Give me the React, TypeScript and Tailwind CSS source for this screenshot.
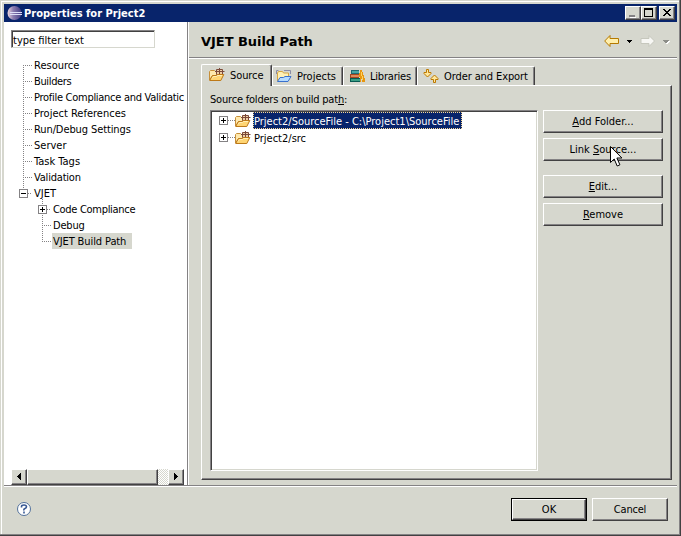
import React from "react";

type Kids = { children?: React.ReactNode };

const raised =
  "border border-t-white border-l-white border-r-[#424142] border-b-[#424142] shadow-[inset_-1px_-1px_0_#848284]";

function Toggle({ open }: { open?: boolean }) {
  return (
    <svg width="9" height="9" className="relative shrink-0" shapeRendering="crispEdges">
      <rect width="9" height="9" fill="#848284" />
      <rect x="1" y="1" width="7" height="7" fill="#fff" />
      <rect x="2" y="4" width="5" height="1" fill="#000" />
      {!open && <rect x="4" y="2" width="1" height="5" fill="#000" />}
    </svg>
  );
}

function Dots({ w }: { w: number }) {
  return (
    <svg width={w} height="1" className="shrink-0" shapeRendering="crispEdges">
      <line x1="0" y1="0.5" x2={w} y2="0.5" stroke="#848284" strokeDasharray="1 1" />
    </svg>
  );
}

function VDots({ h, className }: { h: number; className: string }) {
  return (
    <svg width="1" height={h} className={"absolute " + className} shapeRendering="crispEdges">
      <line x1="0.5" y1="0" x2="0.5" y2={h} stroke="#848284" strokeDasharray="1 1" />
    </svg>
  );
}

function PackageFolder() {
  return (
    <svg width="16" height="16" viewBox="0 0 16 16" className="shrink-0">
      <path d="M.5 13V4.500L1.500 3.500h4l1 1H12v4H3.500z" fill="#ffe9ad" stroke="#c68e39" />
      <path d="M7.500 2.500h6v5h-6z" fill="#efcfa5" stroke="#7b4939" />
      <path d="M6 4.500h9.500M10.500 1v7" stroke="#7b4939" />
      <path d="M.7 13.500 3.500 8.500h3.500l1.500-1h6.300l-3 6z" fill="#ffd573" stroke="#bd7918" />
      <path d="M3 11.500 4.500 9.500h3l1-1h4.500" fill="none" stroke="#fff0b8" />
    </svg>
  );
}

function ProjectFolder() {
  return (
    <svg width="16" height="16" viewBox="0 0 16 16" className="shrink-0">
      <path d="M1.500 13V5L2.500 3.500h4L7.500 5h5v4" fill="#fff0b5" stroke="#d6a642" />
      <path d="M.5 6V2.500h2M8 2.500h6.500V6" fill="none" stroke="#8c8ca5" />
      <path d="M1.500 13.500 4 9.500h3.500l1.500-1h6l-3 5z" fill="#b5dbff" stroke="#3971ce" />
    </svg>
  );
}

function Books() {
  return (
    <svg width="16" height="16" viewBox="0 0 16 16" className="shrink-0" shapeRendering="crispEdges">
      <path d="M2 2h8v4H2z" fill="#216973" />
      <path d="M3 3h7v2H3z" fill="#4aa6a5" />
      <path d="M1 6h9v4H1z" fill="#a54521" />
      <path d="M2 7h8v2H2z" fill="#de8a5a" />
      <path d="M1 10h10v4H1z" fill="#085952" />
      <path d="M2 11h9v2H2z" fill="#399e84" />
      <path d="M11 2h2v2h1v3h1v3h1v4h-3v-3h-1v3h-1V9h-1V5h1z" fill="#e79610" />
      <path d="M12 4h1v4h-1zM13 8h1v4h-1z" fill="#ffd35a" />
    </svg>
  );
}

function OrderArrows() {
  return (
    <svg width="16" height="16" viewBox="0 0 16 16" className="shrink-0">
      <path d="M3.500 1.500h2v3h2.500v1L4.500 9 1 5.500v-1h2.500z" fill="#ffe79c" stroke="#bd7900" />
      <path d="M10.500 14.500h2v-3H15v-1L11.500 7 8 10.500v1h2.500z" fill="#ffe79c" stroke="#bd7900" />
    </svg>
  );
}

function EclipseLogo() {
  return (
    <svg width="16" height="16" viewBox="0 0 16 16" className="shrink-0">
      <defs>
        <linearGradient id="orb" x1="0" y1="0" x2="1" y2="0">
          <stop offset="0" stopColor="#efd7de" />
          <stop offset=".4" stopColor="#8c7db0" />
          <stop offset="1" stopColor="#423c84" />
        </linearGradient>
      </defs>
      <circle cx="7.500" cy="8" r="7" fill="url(#orb)" />
      <path d="M3 7.500h12M3 9.500h12" stroke="#dedff7" />
    </svg>
  );
}

function CaptionButton({ children }: Kids) {
  return <div className={"h-[14px] w-4 shrink-0 bg-[#d6d7ce] " + raised}>{children}</div>;
}

function TreeRow({ label, tracking = "" }: { label: string; tracking?: string }) {
  return (
    <div className="flex h-4 items-center pl-[19px]">
      <Dots w={9} />
      <span className={"ml-[2px] whitespace-nowrap pt-0.5 " + tracking}>{label}</span>
    </div>
  );
}

function SourceRow({ label, selected }: { label: string; selected?: boolean }) {
  return (
    <div className="flex h-[17px] items-center pl-[7px]">
      <Toggle />
      <Dots w={7} />
      <PackageFolder />
      <span
        className={
          "ml-[2px] flex h-[17px] items-center whitespace-nowrap border pt-[3px] " +
          (selected
            ? "w-[209px] border-dotted border-[#f7d794] bg-[#08246b] text-white"
            : "border-transparent")
        }
      >
        {label}
      </span>
    </div>
  );
}

function Tab({ icon, label, active, className }: { icon: React.ReactNode; label: string; active?: boolean; className: string }) {
  return (
    <div
      className={
        "flex items-center rounded-t-[2px] border-l border-t border-r border-l-white border-t-white border-r-[#424142] shadow-[inset_-1px_0_0_#848284] " +
        (active ? "relative -mb-px h-[22px] bg-[#d6d7ce] pb-px " : "h-[19px] ") +
        className
      }
    >
      {icon}
      <span className="ml-[5px] whitespace-nowrap pt-0.5">{label}</span>
    </div>
  );
}

function PushButton({ children, className = "h-[23px]" }: Kids & { className?: string }) {
  return (
    <button className={"flex items-center justify-center whitespace-nowrap bg-[#d6d7ce] pt-px " + raised + " " + className}>
      {children}
    </button>
  );
}

function ScrollButton({ d }: { d: string }) {
  return (
    <div className={"h-4 w-4 shrink-0 bg-[#d6d7ce] " + raised}>
      <svg width="14" height="14" shapeRendering="crispEdges">
        <path d={d} fill="#000" />
      </svg>
    </div>
  );
}

export default function App() {
  return (
    <div className="relative flex h-[536px] w-[681px] flex-col overflow-hidden bg-[#d6d7ce] pl-1 pt-1 pr-1 text-[11px] leading-4 text-black shadow-[inset_-1px_-1px_0_#424142,inset_-2px_-2px_0_#848284,inset_1px_1px_0_#d6d7ce,inset_2px_2px_0_#fff] [font-family:'DejaVu_Sans_Condensed','DejaVu_Sans',sans-serif]">
      <header className="flex h-[18px] shrink-0 items-center bg-[#08246b] pl-[3px] pr-[2px] text-white">
        <EclipseLogo />
        <span className="ml-px flex-1 pt-0.5 font-bold tracking-[0.02px]">Properties for Prject2</span>
        <CaptionButton>
          <svg width="14" height="12" shapeRendering="crispEdges">
            <path d="M4 10h6v1H4z" fill="#fff" />
            <path d="M3 8h6v2H3z" fill="#848284" />
          </svg>
        </CaptionButton>
        <CaptionButton>
          <svg width="14" height="12" shapeRendering="crispEdges">
            <path d="M2 1h9v9H2zM3 3v6h7V3z" fill="#000" fillRule="evenodd" />
          </svg>
        </CaptionButton>
        <div className="w-[2px]" />
        <CaptionButton>
          <svg width="14" height="12" shapeRendering="crispEdges">
            <path d="M3 2h2v1h1v1h2V3h1V2h2v1h-1v1H9v1H8v1h1v1h1v1h1v1H9V8H8V7H6v1H5v1H3V8h1V7h1V6h1V5H5V4H4V3H3z" fill="#000" />
          </svg>
        </CaptionButton>
      </header>

      <div className="flex h-[463px] shrink-0">
        <aside className="relative flex w-[185px] shrink-0 flex-col border-r border-r-white bg-white pl-[7px] shadow-[inset_-1px_0_0_#848284]">
          <input
            readOnly
            value="type filter text"
            className="mt-[8px] h-[18px] w-[144px] border border-b-[#d6d7ce] border-l-[#848284] border-r-[#d6d7ce] border-t-[#848284] bg-white px-px pt-0.5 shadow-[inset_1px_1px_0_#424142] outline-none"
          />
          <nav className="relative -ml-[7px] mt-[9px] w-[182px] flex-1">
            <VDots h={124} className="left-[19px] top-2" />
            <VDots h={42} className="left-[38px] top-[142px]" />
            <TreeRow label="Resource" />
            <TreeRow label="Builders" tracking="tracking-[-0.35px]" />
            <TreeRow label="Profile Compliance and Validatic" tracking="tracking-[-0.28px]" />
            <TreeRow label="Project References" />
            <TreeRow label="Run/Debug Settings" tracking="tracking-[-0.1px]" />
            <TreeRow label="Server" />
            <TreeRow label="Task Tags" />
            <TreeRow label="Validation" tracking="tracking-[-0.2px]" />
            <div className="flex h-4 items-center pl-[15px]">
              <Toggle open />
              <Dots w={4} />
              <span className="ml-[2px] pt-0.5">VJET</span>
            </div>
            <div className="flex h-4 items-center pl-[34px]">
              <Toggle />
              <Dots w={4} />
              <span className="ml-[2px] pt-0.5 tracking-[-0.3px]">Code Compliance</span>
            </div>
            <div className="flex h-4 items-center pl-[38px]">
              <Dots w={9} />
              <span className="ml-[2px] pt-0.5 tracking-[-0.2px]">Debug</span>
            </div>
            <div className="flex h-4 items-center pl-[38px]">
              <Dots w={9} />
              <span className="ml-px flex h-4 w-20 items-center whitespace-nowrap bg-[#d6d7ce] pl-px pt-0.5 tracking-[-0.1px]">
                VJET Build Path
              </span>
            </div>
          </nav>
          <div className="flex h-4 w-[173px] bg-[repeating-conic-gradient(#fff_0_25%,#d6d7ce_0_50%)] bg-[length:2px_2px]">
            <ScrollButton d="M8 3h1v7H8zM7 4h1v5H7zM6 5h1v3H6zM5 6h1v1H5z" />
            <div className={"h-4 w-[131px] bg-[#d6d7ce] " + raised} />
            <div className="flex-1" />
            <ScrollButton d="M5 3h1v7H5zM6 4h1v5H6zM7 5h1v3H7zM8 6h1v1H8z" />
          </div>
        </aside>

        <main className="flex w-[488px] flex-col">
          <div className="flex h-[37px] shrink-0 items-center border-b border-white pl-3 pr-[7px] pt-0.5 shadow-[inset_0_-1px_0_#848284]">
            <h1 className="flex-1 pt-0.5 text-[13px] font-bold tracking-[-0.05px] [font-family:'DejaVu_Sans',sans-serif]">VJET Build Path</h1>
            <svg width="66" height="14" viewBox="0 0 66 14">
              <path d="M.7 7 6 1.500v3h8.500v5H6v3z" fill="#ffefad" stroke="#b57900" />
              <path d="M23 6h5v1h-1v1h-1v1h-1V8h-1V7h-1z" fill="#000" shapeRendering="crispEdges" />
              <path d="M37 4.500h8v-3L50.500 7 45 12.500v-3h-8z" fill="#f7f7f4" stroke="#c6c7bd" />
              <path d="M60 7h6v1h-1v1h-1v1h-2z" fill="#fff" shapeRendering="crispEdges" />
              <path d="M59 6h6v1h-1v1h-1v1h-2V8h-1V7h-1z" fill="#8c8d88" shapeRendering="crispEdges" />
            </svg>
          </div>

          <div className="mt-[5px] flex h-[21px] shrink-0 items-end pl-3">
            <Tab active className="w-[71px] pl-[7px] tracking-[-0.1px]" icon={<PackageFolder />} label="Source" />
            <Tab className="w-[71px] pl-[3px]" icon={<ProjectFolder />} label="Projects" />
            <Tab className="w-[74px] pl-[5px] tracking-[-0.2px]" icon={<Books />} label="Libraries" />
            <Tab className="w-[118px] pl-[5px] tracking-[-0.1px]" icon={<OrderArrows />} label="Order and Export" />
          </div>
          <section className={"ml-3 flex h-[395px] w-[471px] flex-col pl-2 pt-[6px] " + raised}>
            <div className="tracking-[-0.2px]">
              Source folders on build pat<u>h</u>:
            </div>
            <div className="mt-[2px] flex gap-[5px]">
              <div className="h-[361px] w-[328px] shrink-0 border border-b-white border-l-[#848284] border-r-white border-t-[#848284] bg-white pl-[1px] pt-[1px] shadow-[inset_1px_1px_0_#424142,inset_-1px_-1px_0_#d6d7ce]">
                <SourceRow selected label="Prject2/SourceFile - C:\Project1\SourceFile" />
                <SourceRow label="Prject2/src" />
              </div>
              <div className="flex w-[120px] flex-col">
                <PushButton>
                  <span><u>A</u>dd Folder...</span>
                </PushButton>
                <PushButton className="mt-[5px] h-[23px]">
                  <span>Link <u>S</u>ource...</span>
                </PushButton>
                <PushButton className="mt-[14px] h-[23px]">
                  <span><u>E</u>dit...</span>
                </PushButton>
                <PushButton className="mt-[5px] h-[23px]">
                  <span><u>R</u>emove</span>
                </PushButton>
              </div>
            </div>
          </section>
        </main>
      </div>

      <footer className="flex flex-1 items-start border-t border-[#848284] pl-3 pr-[9px] pt-[12px] shadow-[inset_0_1px_0_#fff]">
        <svg width="16" height="16" viewBox="0 0 16 16" className="mt-[3px]">
          <circle cx="8" cy="8" r="6.500" fill="#fff" stroke="#52719c" />
          <path d="M5.500 6.500V5.500Q5.500 4 8 4t2.500 1.800Q10.500 7 9 7.500T8 9.500M8 10.500v2" fill="none" stroke="#395994" strokeWidth="1.600" />
        </svg>
        <div className="flex-1" />
        <div className="border border-black">
          <PushButton className="h-[21px] w-[74px]">OK</PushButton>
        </div>
        <PushButton className="ml-[5px] h-[23px] w-[76px] tracking-[-0.2px]">Cancel</PushButton>
      </footer>

      <svg width="13" height="21" viewBox="0 0 13 21" className="absolute left-[610px] top-[146px]">
        <path d="M.5.5v16l3.700-3.500 3 7 2.700-1.200-3-6.800h5z" fill="#fff" stroke="#000" />
      </svg>
    </div>
  );
}
